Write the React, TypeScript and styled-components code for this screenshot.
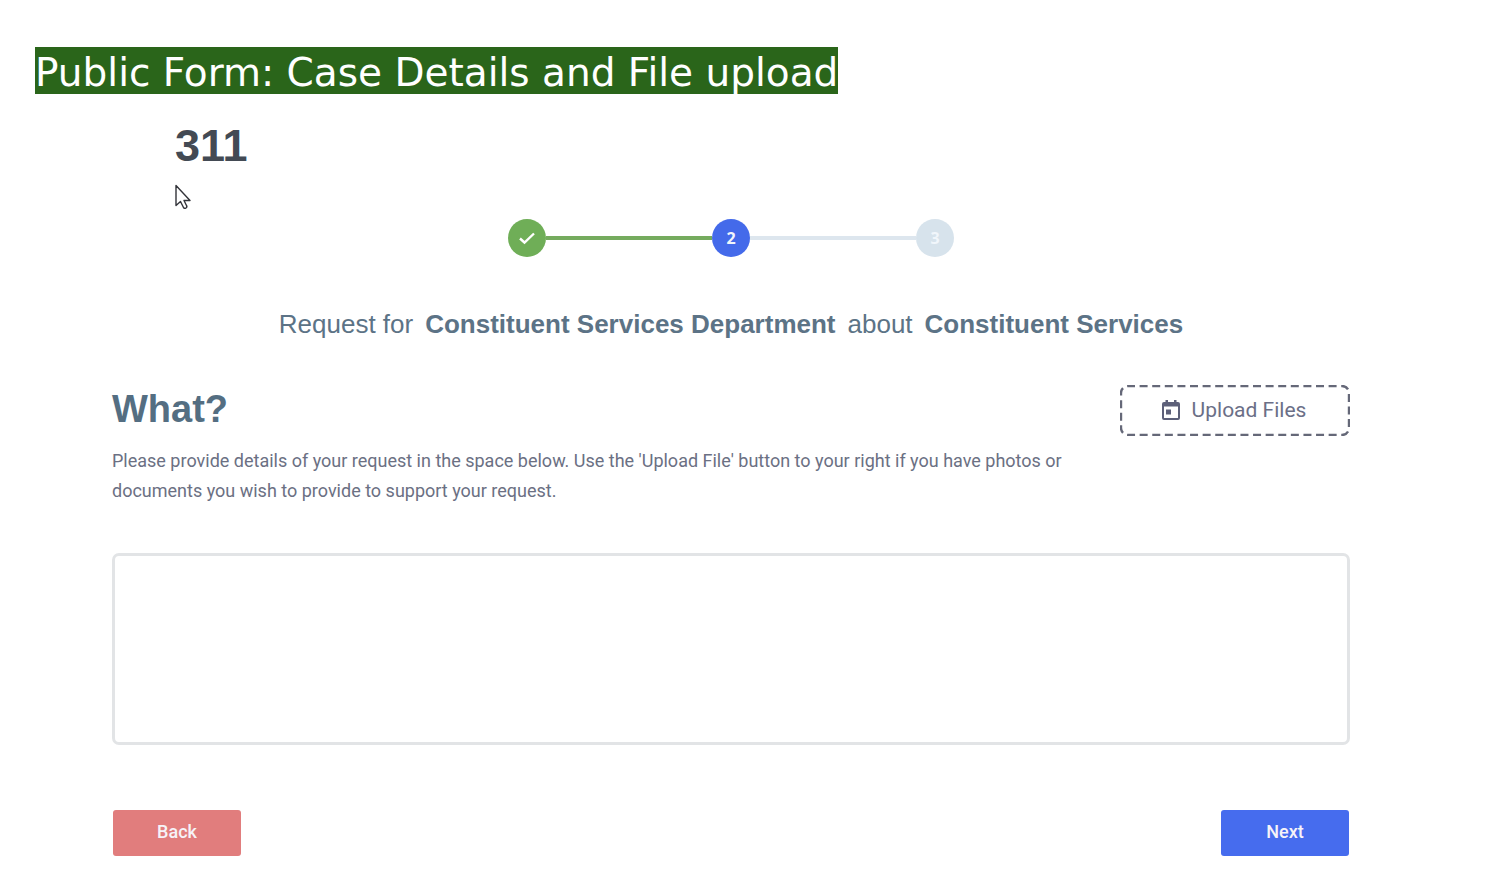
import React from "react";
import styled, { createGlobalStyle } from "styled-components";

const GlobalStyle = createGlobalStyle`
  *, *::before, *::after { box-sizing: border-box; }
  body {
    margin: 0;
    background: #fff;
    color: #6b7083;
    font-family: Roboto, sans-serif;
  }
  h1, h2, p, ol { margin: 0; padding: 0; }
`;

const Page = styled.div`
  padding: 47px 144px 38px 112px;
`;

const Banner = styled.header`
  display: flex;
  margin-left: -77px;
`;

const BannerTitle = styled.h1`
  padding-top: 5px;
  background: #2a651a;
  color: #fff;
  font: 400 39px/42px "DejaVu Sans", sans-serif;
`;

const Brand = styled.div`
  position: relative;
  margin: 26px 0 0 63px;
  color: #434a54;
  font: 700 45px/52px "Liberation Sans", sans-serif;
`;

const Pointer = styled.svg`
  position: absolute;
  top: 64px;
  left: 0;
  width: 16px;
  height: 27px;
`;

const Stepper = styled.ol`
  display: flex;
  align-items: center;
  width: 446px;
  margin: 47px auto 0;
  list-style: none;
`;

const Step = styled.li<{ $color: string }>`
  display: flex;
  flex: none;
  align-items: center;
  justify-content: center;
  width: 38px;
  height: 38px;
  border-radius: 50%;
  background: ${(p) => p.$color};
  color: #f1f6fb;
  font: 700 16px/20px "Open Sans", sans-serif;
`;

const StepLine = styled.li<{ $color: string }>`
  flex: 1;
  height: 4px;
  background: ${(p) => p.$color};
`;

const Summary = styled.p`
  display: flex;
  justify-content: center;
  gap: 12px;
  margin-top: 51px;
  color: #5c7386;
  font: 400 26px/32px "Liberation Sans", sans-serif;
`;

const Details = styled.section`
  display: flex;
  justify-content: space-between;
  align-items: flex-start;
  margin-top: 45px;
`;

const DetailsText = styled.div`
  max-width: 960px;
`;

const Heading = styled.h2`
  color: #546e82;
  font: 700 38px/48px "Liberation Sans", sans-serif;
`;

const Help = styled.p`
  margin-top: 13px;
  font-size: 18px;
  line-height: 30px;
`;

const UploadButton = styled.button`
  position: relative;
  display: flex;
  flex: none;
  align-items: center;
  justify-content: center;
  gap: 12px;
  width: 230px;
  height: 51px;
  padding: 0 2px 2px 0;
  border: 0;
  background: none;
  color: #6b6f87;
  font: 400 21px/24px Roboto, sans-serif;
`;

const DashedOutline = styled.svg`
  position: absolute;
  inset: 0;
  width: 100%;
  height: 100%;
`;

const Message = styled.textarea`
  display: block;
  width: 100%;
  height: 192px;
  margin-top: 47px;
  padding: 16px;
  border: 3px solid #e2e4e6;
  border-radius: 7px;
  background: #fff;
  color: inherit;
  font: 400 18px/30px Roboto, sans-serif;
  resize: none;
`;

const Actions = styled.div`
  display: flex;
  justify-content: space-between;
  margin-top: 65px;
  padding: 0 1px;
`;

const ActionButton = styled.button<{ $color: string }>`
  width: 128px;
  height: 46px;
  padding: 0 0 2px;
  border: 0;
  border-radius: 3px;
  background: ${(p) => p.$color};
  color: #f6f3f8;
  font: 500 18px/24px Roboto, sans-serif;
`;

export default function App() {
  return (
    <>
      <GlobalStyle />
      <Page>
        <Banner>
          <BannerTitle>Public Form: Case Details and File upload</BannerTitle>
        </Banner>
        <Brand>
          311
          <Pointer viewBox="0 0 16 27" aria-hidden="true">
            <path
              d="M1 1.500V21.500L5.500 17.500L8.500 23.500Q9.500 25 11 24Q12.500 23 11.500 21.500L9 16.500H15Z"
              fill="#fff"
              stroke="#33343a"
              strokeWidth="1.400"
              strokeLinejoin="round"
            />
          </Pointer>
        </Brand>

        <Stepper aria-label="Progress">
          <Step $color="#6fae57">
            <svg width="16" height="13" viewBox="0 0 16 13" role="img" aria-label="Done">
              <path d="M1 6.500L5.500 10.500L15 1.500" fill="none" stroke="#fff" strokeWidth="2.400" />
            </svg>
          </Step>
          <StepLine $color="#75ab5e" aria-hidden="true" />
          <Step $color="#446aea" aria-current="step">2</Step>
          <StepLine $color="#dde6ee" aria-hidden="true" />
          <Step $color="#d7e3ec">3</Step>
        </Stepper>

        <Summary>
          <span>Request for</span>
          <strong>Constituent Services Department</strong>
          <span>about</span>
          <strong>Constituent Services</strong>
        </Summary>

        <Details>
          <DetailsText>
            <Heading id="what">What?</Heading>
            <Help id="what-help">
              Please provide details of your request in the space below. Use the 'Upload File' button to
              your right if you have photos or documents you wish to provide to support your request.
            </Help>
          </DetailsText>
          <UploadButton type="button">
            <DashedOutline aria-hidden="true">
              <rect
                x="1"
                y="1"
                width="228"
                height="49"
                rx="7"
                fill="none"
                stroke="#656878"
                strokeWidth="2.400"
                strokeDasharray="8 4.600"
                strokeDashoffset="1"
              />
            </DashedOutline>
            <svg width="18" height="22" viewBox="0 0 18 22" aria-hidden="true">
              <path
                fill="#5d6079"
                fillRule="evenodd"
                d="M3.500 1H6V3H12V1H14.500V3H16Q18 3 18 5V19Q18 21 16 21H2Q0 21 0 19V5Q0 3 2 3H3.500ZM2 7.500V19H16V7.500ZM4 10.500H9V15.500H4Z"
              />
            </svg>
            Upload Files
          </UploadButton>
        </Details>

        <Message aria-labelledby="what" aria-describedby="what-help" />

        <Actions>
          <ActionButton type="button" $color="#e17d7d">Back</ActionButton>
          <ActionButton type="button" $color="#466cee">Next</ActionButton>
        </Actions>
      </Page>
    </>
  );
}
